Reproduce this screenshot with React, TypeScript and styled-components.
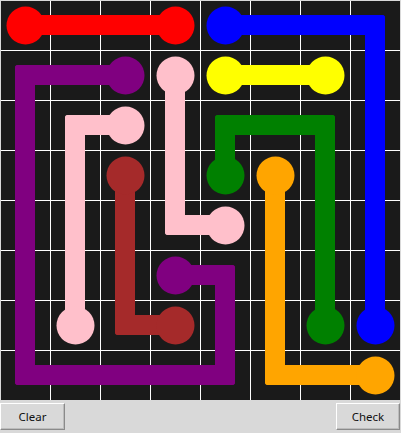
import React from "react";
import styled, { createGlobalStyle } from "styled-components";

const GlobalStyle = createGlobalStyle`
  html, body {
    margin: 0;
    padding: 0;
    background: #d9d9d9;
  }
`;

const Frame = styled.div`
  width: 401px;
  height: 433px;
  display: flex;
  flex-direction: column;
  background: #d9d9d9;
`;

const Board = styled.svg`
  display: block;
  width: 401px;
  height: 401px;
`;

const Toolbar = styled.div`
  display: flex;
  justify-content: space-between;
  align-items: flex-start;
  padding-top: 2px;
  padding-right: 1px;
`;

const TkButton = styled.button<{ $width: number }>`
  width: ${(p) => p.$width}px;
  height: 27px;
  box-sizing: border-box;
  background: #d9d9d9;
  border: 1px solid;
  border-color: #ffffff #8a8a8a #8a8a8a #ffffff;
  box-shadow: inset -1px -1px 0 #bcbcbc;
  font-family: "Noto Sans", "Liberation Sans", sans-serif;
  font-size: 11.5px;
  color: #111;
  padding: 0;
  cursor: pointer;
`;

const CELL = 50;
const PIPE = 20;
const DOT = 19;

type Flow = { color: string; path: [number, number][] };

const flows: Flow[] = [
  { color: "#ff0000", path: [[0, 0], [3, 0]] },
  { color: "#0000ff", path: [[4, 0], [7, 0], [7, 6]] },
  { color: "#800080", path: [[2, 1], [0, 1], [0, 7], [4, 7], [4, 5], [3, 5]] },
  { color: "#ffff00", path: [[4, 1], [6, 1]] },
  { color: "#ffc0cb", path: [[3, 1], [3, 4], [4, 4]] },
  { color: "#ffc0cb", path: [[2, 2], [1, 2], [1, 6]] },
  { color: "#a52a2a", path: [[2, 3], [2, 6], [3, 6]] },
  { color: "#008000", path: [[4, 3], [4, 2], [6, 2], [6, 6]] },
  { color: "#ffa500", path: [[5, 3], [5, 7], [7, 7]] },
];

const center = (i: number) => i * CELL + CELL / 2;

// one straight run of pipe, padded by half its width so corners overlap
const Segment: React.FC<{ a: [number, number]; b: [number, number]; color: string }> = ({ a, b, color }) => {
  const x1 = Math.min(center(a[0]), center(b[0])) - PIPE / 2;
  const y1 = Math.min(center(a[1]), center(b[1])) - PIPE / 2;
  const x2 = Math.max(center(a[0]), center(b[0])) + PIPE / 2;
  const y2 = Math.max(center(a[1]), center(b[1])) + PIPE / 2;
  return <rect x={x1} y={y1} width={x2 - x1} height={y2 - y1} rx={3} fill={color} />;
};

const lines = [1, 2, 3, 4, 5, 6, 7].map((i) => i * CELL);

const App: React.FC = () => {
  return (
    <Frame>
      <GlobalStyle />
      <Board viewBox="0 0 401 401">
        <rect x={0} y={0} width={401} height={401} fill="#d9d9d9" />
        <rect x={1} y={1} width={399} height={399} fill="#1a1a1a" />
        {lines.map((p) => (
          <g key={p}>
            <rect x={p} y={1} width={1} height={399} fill="#ffffff" />
            <rect x={1} y={p} width={399} height={1} fill="#ffffff" />
          </g>
        ))}
        {flows.map((f, fi) => {
          const start = f.path[0];
          const end = f.path[f.path.length - 1];
          return (
            <g key={fi}>
              {f.path.slice(1).map((pt, i) => (
                <Segment key={i} a={f.path[i]} b={pt} color={f.color} />
              ))}
              <circle cx={center(start[0]) + 0.5} cy={center(start[1]) + 0.5} r={DOT} fill={f.color} />
              <circle cx={center(end[0]) + 0.5} cy={center(end[1]) + 0.5} r={DOT} fill={f.color} />
            </g>
          );
        })}
      </Board>
      <Toolbar>
        <TkButton $width={65}>Clear</TkButton>
        <TkButton $width={64}>Check</TkButton>
      </Toolbar>
    </Frame>
  );
};

export default App;
